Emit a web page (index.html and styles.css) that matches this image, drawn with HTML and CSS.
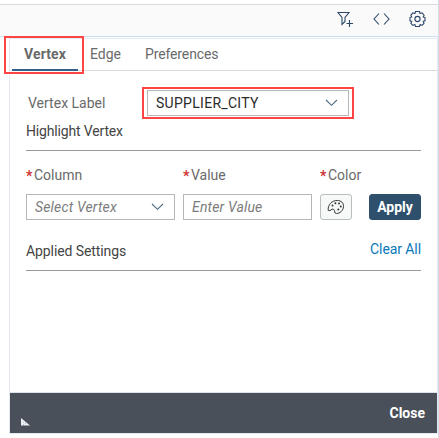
FILE: index.html
```html
<!DOCTYPE html>
<html lang="en">
<head>
<meta charset="utf-8">
<title>Vertex settings</title>
<link rel="stylesheet" href="styles.css">
</head>
<body>
<div class="page">
  <header class="toolbar">
    <svg class="icon" width="18" height="18" viewBox="0 0 18 18"><path d="M2 2.5H13L9 7.5V11.5L6 14.5V7.5Z M10.5 13.5H17 M13.5 10V17"/></svg>
    <svg class="icon" width="18" height="18" viewBox="0 0 18 18"><path d="M7 3.5L2 9L7 14.5 M12 3.5L17 9L12 14.5"/></svg>
    <svg class="icon" width="18" height="18" viewBox="0 0 18 18"><path d="M7.5 1.5H11.5L12.1 3.5L14.2 2.8L16.1 5.2L15.2 7L17 7.6V10.8L15.2 11.4L16 13.4L14 15.4L12.1 14.6L11.5 16.5H7.5L6.9 14.6L4.9 15.4L2.9 13.4L3.7 11.4L2 10.8V7.6L3.7 7L2.9 5.2L4.8 2.8L6.9 3.5Z"/><circle cx="9.5" cy="9" r="2.6"/></svg>
  </header>
  <main class="panel">
    <nav class="tabs">
      <a class="tab tab-active">Vertex</a>
      <a class="tab tab-edge">Edge</a>
      <a class="tab tab-preferences">Preferences</a>
    </nav>
    <div class="content">
      <div class="label-row">
        <span class="label vertex-label">Vertex Label</span>
        <div class="highlight"><div class="field city"><span>SUPPLIER_CITY</span>
          <svg class="chevron" width="13" height="8" viewBox="0 0 13 8"><path d="M1 1L6.5 6.3L12 1"/></svg></div></div>
      </div>
      <h2 class="heading">Highlight Vertex</h2>
      <div class="settings">
        <span class="label required">Column</span><span class="label required">Value</span><span class="label required">Color</span><span></span>
        <div class="field placeholder"><span>Select Vertex</span>
          <svg class="chevron" width="13" height="8" viewBox="0 0 13 8"><path d="M1 1L6.5 6.3L12 1"/></svg></div>
        <div class="field placeholder"><span>Enter Value</span></div>
        <button class="palette" aria-label="Color"><svg width="18" height="16" viewBox="0 0 18 16"><path d="M1.2 11.3C.7 5.6 5 1.5 10.2 1.5C14.2 1.5 16.8 4 16.5 7.6C16.2 11.8 12.8 14.5 9.5 14.5C6.6 14.5 8.6 11.4 6.5 10.2C4.5 9.2 3.6 12.8 1.2 11.3Z"/><circle cx="5.5" cy="6.5" r="1"/><circle cx="8.4" cy="4.3" r="1"/><circle cx="12" cy="4.5" r="1"/><circle cx="13.8" cy="7.6" r="1"/><circle cx="11.3" cy="10.6" r="1"/></svg></button>
        <button class="apply">Apply</button>
      </div>
      <div class="applied"><span>Applied Settings</span><a class="clear">Clear All</a></div>
    </div>
    <footer class="footer">
      <svg width="9" height="8" viewBox="0 0 9 8"><path d="M0 0L9 7.5H0Z" fill="#eef1f3"/><path d="M2 4.5H3M4 5.5H5M2 6.5H3" stroke="#b6bdc3"/></svg>
      <span>Close</span>
    </footer>
  </main>
</div>
</body>
</html>
```
FILE: styles.css
```css
*, *::before, *::after { box-sizing: border-box; }
body { margin: 0; background: #fff; overflow: hidden; }
.page {
  width: 439px; height: 438px; padding-top: 4px;
  border-right: 1px solid #d5dbe8;
  font: 14px/20px Roboto, "Liberation Sans", sans-serif; color: #6a6a6a;
}
.toolbar {
  height: 33px; display: flex; justify-content: flex-end; align-items: center; gap: 18px;
  padding: 0 12px 3px 0; background: #fafafa;
  border-top: 1px solid #d9d9de; border-bottom: 1px solid #cbdff0;
}
.icon { fill: none; stroke: #2c4769; stroke-width: 1.1; }
.panel {
  width: 429px; height: 396px; margin: 1px 0 0 9px; display: flex; flex-direction: column;
  border: 1px solid #e5eaf2;
}
.tabs { height: 32px; flex: none; display: flex; border-bottom: 1px solid #d9d9d9; }
.tab { height: 31px; line-height: 31px; }
.tab-active {
  position: relative; width: 66px; height: 32px; margin-left: 2px; text-align: center;
  font-weight: 700; border-bottom: 2px solid #35608c; letter-spacing: .1px; margin-bottom: -1px;
}
.tab-active::after { content: ""; position: absolute; left: -8px; top: -3px; width: 80px; height: 38px; border: 2px solid #f44; }
.tab-edge { margin-left: 12px; }
.tab-preferences { margin-left: 24px; letter-spacing: -.13px; }
.content { flex: 1; padding: 16px 16px 0; }
.label-row { height: 32px; display: flex; align-items: center; }
.vertex-label { width: 116px; padding-left: 2px; }
.highlight { width: 212px; height: 32px; padding: 1px 3px; border: 2px solid #f44; }
.field {
  height: 26px; display: flex; align-items: center; justify-content: space-between;
  padding: 0 10px 0 8px; border: 1px solid #b7b7b7; background: #fff;
}
.city { color: #2b2b2b; letter-spacing: .29px; }
.chevron { fill: none; stroke: #4b6984; stroke-width: 1.1; }
.heading {
  height: 32px; margin: 0 0 14px; padding-top: 2px; border-bottom: 1px solid #999;
  font-size: 14px; font-weight: 400; color: #444; letter-spacing: -.16px;
}
.settings { display: grid; grid-template-columns: 149px 129px 32px 52px; grid-template-rows: 20px 26px; row-gap: 9px; column-gap: 8px; }
.settings > :nth-child(4n) { margin-left: 9px; width: 52px; }
.required { white-space: nowrap; }
.required::before { content: "*"; color: #c33; font-weight: 700; font-size: 14px; line-height: 16px; display: inline-block; width: 8px; vertical-align: -1px; }
.placeholder { font-style: italic; color: #7c7c7c; letter-spacing: .17px; }
button { padding: 0; font: inherit; border: 1px solid #b9bdc0; border-radius: 3px; }
.palette { background: #f7f9f9; display: flex; align-items: center; justify-content: center; }
.palette path { fill: none; stroke: #333; stroke-width: 1; }
.palette circle { fill: #333; }
.apply { background: #2f506c; border-color: #2f506c; color: #fff; font-weight: 700; }
.applied { display: flex; justify-content: space-between; height: 31px; margin-top: 20px; padding-top: 1px; border-bottom: 1px solid #999; color: #444; letter-spacing: -.09px; }
.clear { color: #0a79b9; margin-top: -2px; }
.footer {
  height: 41px; flex: none; display: flex; align-items: center; justify-content: space-between;
  padding: 0 12px 0 11px; background: #495059; border-top: 1px solid #dfe2e7; color: #fff; font-weight: 700;
}
.footer svg { margin-top: 17px; }
```
